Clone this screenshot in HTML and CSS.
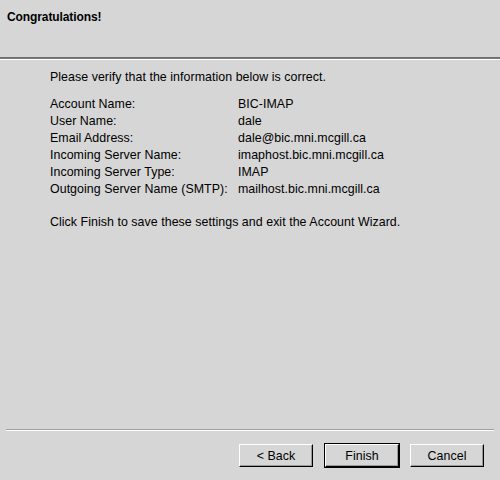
FILE: index.html
```html
<!DOCTYPE html>
<html>
<head>
<meta charset="utf-8">
<link rel="stylesheet" href="styles.css">
</head>
<body>
<div class="wizard">
  <div class="header">
    <h1 class="title">Congratulations!</h1>
  </div>
  <div class="sep-full"></div>
  <div class="content">
    <p class="intro">Please verify that the information below is correct.</p>
    <div class="info">
      <span class="label">Account Name:</span><span class="value">BIC-IMAP</span>
      <span class="label">User Name:</span><span class="value">dale</span>
      <span class="label">Email Address:</span><span class="value">dale@bic.mni.mcgill.ca</span>
      <span class="label">Incoming Server Name:</span><span class="value">imaphost.bic.mni.mcgill.ca</span>
      <span class="label">Incoming Server Type:</span><span class="value">IMAP</span>
      <span class="label">Outgoing Server Name (SMTP):</span><span class="value">mailhost.bic.mni.mcgill.ca</span>
    </div>
    <p class="outro">Click Finish to save these settings and exit the Account Wizard.</p>
  </div>
  <div class="footer">
    <div class="sep-inset"></div>
    <div class="buttons">
      <button class="btn">&lt; Back</button>
      <span class="default-frame"><button class="btn">Finish</button></span>
      <button class="btn">Cancel</button>
    </div>
  </div>
</div>
</body>
</html>
```

FILE: styles.css
```css
html, body {
  margin: 0;
  padding: 0;
  background: #d6d6d6;
}
.wizard {
  width: 500px;
  height: 480px;
  display: flex;
  flex-direction: column;
  font-family: "Liberation Sans", Arial, sans-serif;
  font-size: 12.4px;
  letter-spacing: 0.05px;
  color: #000;
}
.header {
  height: 57px;
  box-sizing: border-box;
  padding: 10px 0 0 7px;
}
.title {
  margin: 0;
  font-size: 12px;
  font-weight: bold;
  letter-spacing: -0.1px;
  line-height: 15px;
}
.sep-full {
  height: 1px;
  background: #787878;
  border-top: 1px solid #6e6e6e;
  border-bottom: 1px solid #ffffff;
}
.content {
  flex: 1;
  padding: 10px 0 0 50px;
}
.intro {
  margin: 0;
  line-height: 15px;
}
.info {
  display: grid;
  grid-template-columns: 188px auto;
  grid-auto-rows: 17px;
  align-items: center;
  margin-top: 10px;
}
.outro {
  margin: 18px 0 0 0;
  line-height: 15px;
}
.footer {
  padding: 0 6px;
}
.sep-inset {
  height: 1px;
  background: #a0a0a0;
  border-bottom: 1px solid #ffffff;
}
.buttons {
  display: flex;
  justify-content: flex-end;
  align-items: center;
  padding: 12px 10px 12px 0;
}
.btn {
  width: 74px;
  height: 23px;
  box-sizing: border-box;
  margin: 0;
  padding: 0;
  background: #d6d6d6;
  font-family: "Liberation Sans", Arial, sans-serif;
  font-size: 12.4px;
  letter-spacing: 0.05px;
  color: #000;
  border-top: 1px solid #ffffff;
  border-left: 1px solid #ffffff;
  border-right: 1px solid #000000;
  border-bottom: 1px solid #000000;
  box-shadow: inset -1px -1px 0 #9a9a9a;
}
.default-frame {
  display: flex;
  border: 1px solid #000;
  margin: 0 10px 0 11px;
}
```
